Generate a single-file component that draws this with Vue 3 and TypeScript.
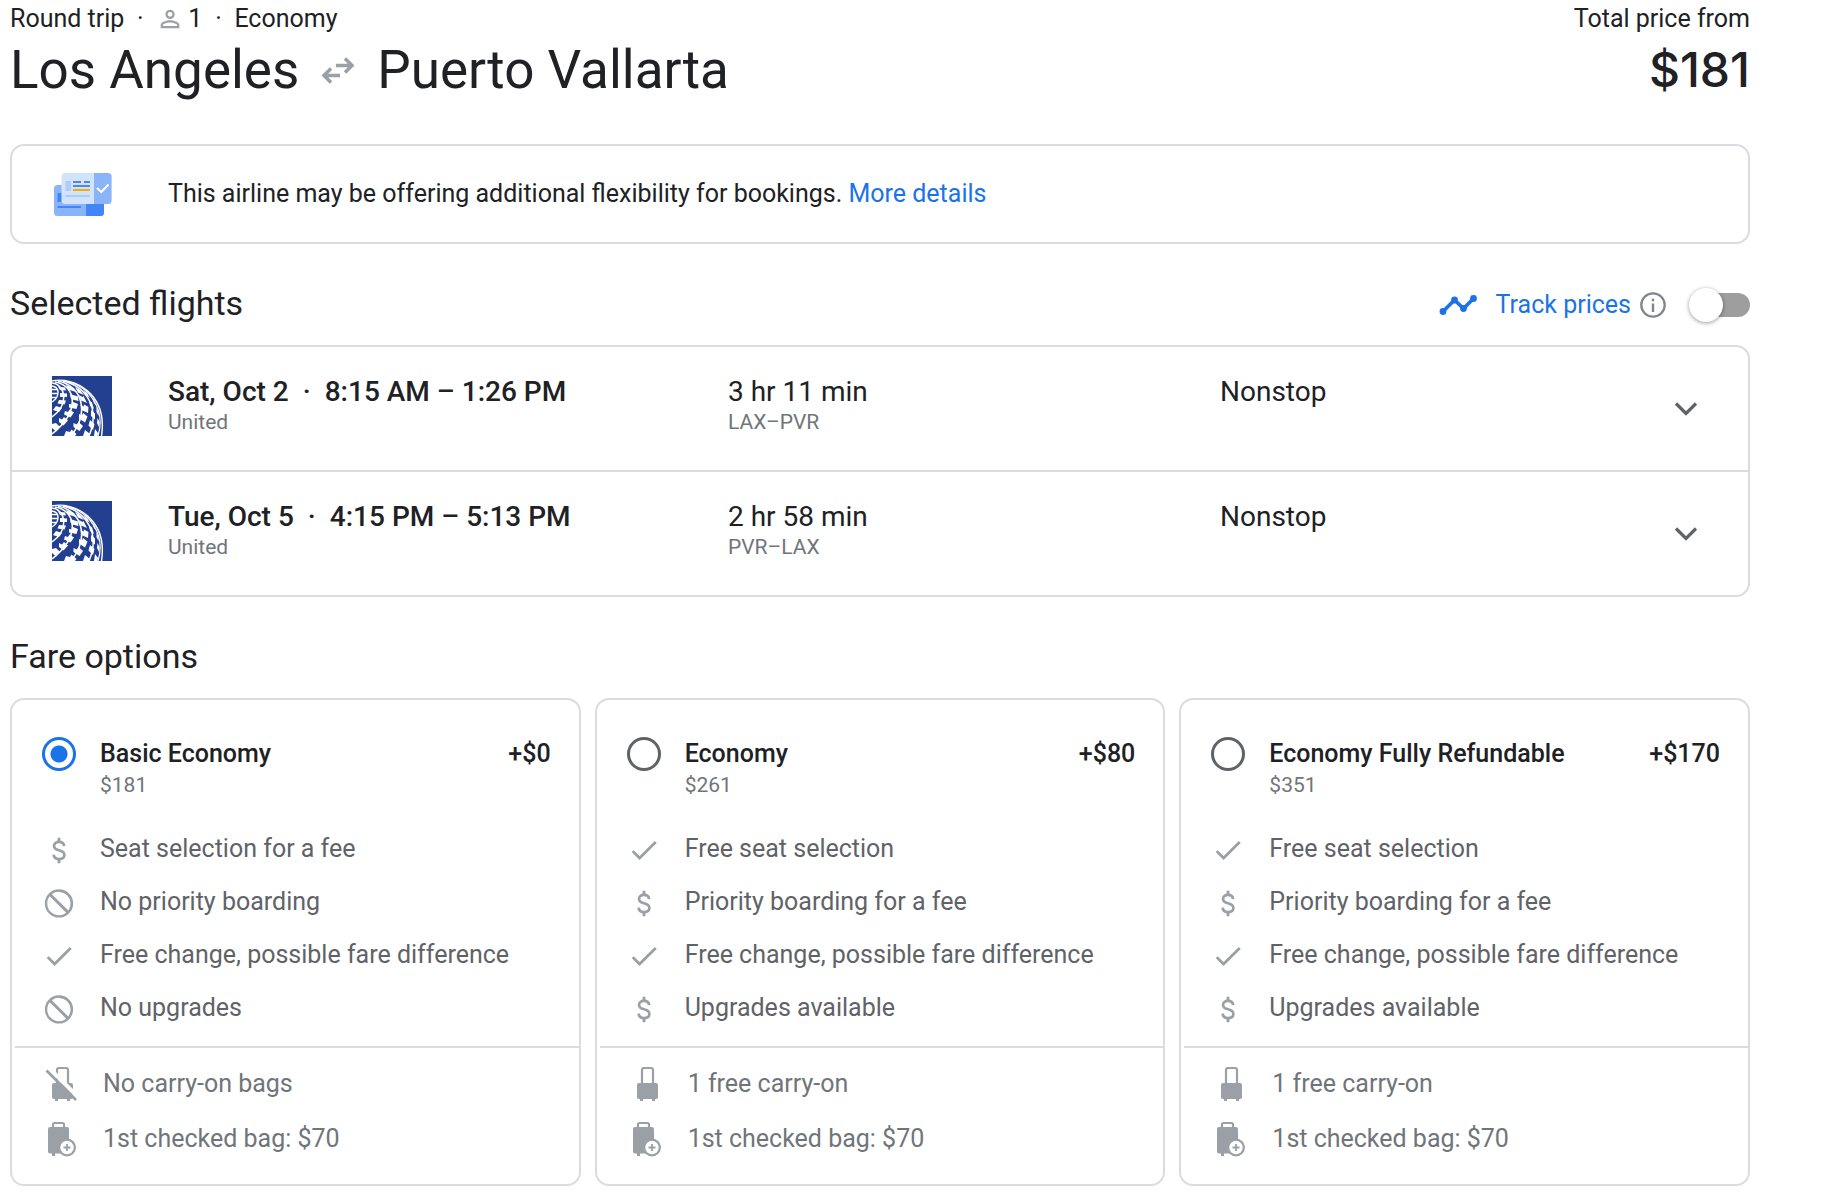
<script setup lang="ts">
import { ref } from 'vue'

type Perk = 'fee' | 'none' | 'included'
type Bag = 'noCarryOn' | 'carryOn' | 'checked'

interface Flight {
  id: string
  date: string
  times: string
  airline: string
  duration: string
  route: string
  stops: string
}

interface Fare {
  id: string
  name: string
  extra: string
  total: string
  perks: { kind: Perk; text: string }[]
  bags: { kind: Bag; text: string }[]
}

const flights: Flight[] = [
  { id: 'out', date: 'Sat, Oct 2', times: '8:15 AM – 1:26 PM', airline: 'United', duration: '3 hr 11 min', route: 'LAX–PVR', stops: 'Nonstop' },
  { id: 'back', date: 'Tue, Oct 5', times: '4:15 PM – 5:13 PM', airline: 'United', duration: '2 hr 58 min', route: 'PVR–LAX', stops: 'Nonstop' },
]

const fares: Fare[] = [
  {
    id: 'basic',
    name: 'Basic Economy',
    extra: '+$0',
    total: '$181',
    perks: [
      { kind: 'fee', text: 'Seat selection for a fee' },
      { kind: 'none', text: 'No priority boarding' },
      { kind: 'included', text: 'Free change, possible fare difference' },
      { kind: 'none', text: 'No upgrades' },
    ],
    bags: [
      { kind: 'noCarryOn', text: 'No carry-on bags' },
      { kind: 'checked', text: '1st checked bag: $70' },
    ],
  },
  {
    id: 'economy',
    name: 'Economy',
    extra: '+$80',
    total: '$261',
    perks: [
      { kind: 'included', text: 'Free seat selection' },
      { kind: 'fee', text: 'Priority boarding for a fee' },
      { kind: 'included', text: 'Free change, possible fare difference' },
      { kind: 'fee', text: 'Upgrades available' },
    ],
    bags: [
      { kind: 'carryOn', text: '1 free carry-on' },
      { kind: 'checked', text: '1st checked bag: $70' },
    ],
  },
  {
    id: 'refundable',
    name: 'Economy Fully Refundable',
    extra: '+$170',
    total: '$351',
    perks: [
      { kind: 'included', text: 'Free seat selection' },
      { kind: 'fee', text: 'Priority boarding for a fee' },
      { kind: 'included', text: 'Free change, possible fare difference' },
      { kind: 'fee', text: 'Upgrades available' },
    ],
    bags: [
      { kind: 'carryOn', text: '1 free carry-on' },
      { kind: 'checked', text: '1st checked bag: $70' },
    ],
  },
]

const selectedFare = ref('basic')
const trackPrices = ref(false)
</script>

<template>
  <main class="page">
    <header class="trip">
      <div>
        <p class="summary">
          <span>Round trip</span>
          <span class="dot">·</span>
          <svg class="person" viewBox="0 0 24 24" aria-hidden="true">
            <path d="M12 5.9a2.1 2.1 0 1 1 0 4.2 2.1 2.1 0 0 1 0-4.2m0 9c2.97 0 6.1 1.46 6.1 2.1v1.1H5.9V17c0-.64 3.13-2.1 6.1-2.1M12 4a4 4 0 1 0 0 8 4 4 0 0 0 0-8zm0 9c-2.67 0-8 1.34-8 4v3h16v-3c0-2.66-5.33-4-8-4z" />
          </svg>
          <span class="count">1</span>
          <span class="dot">·</span>
          <span>Economy</span>
        </p>
        <h1 class="cities">
          <span>Los Angeles</span>
          <svg class="swap" viewBox="0 0 34 27" aria-label="round trip to">
            <path d="M15 8.500H31M24 1.500l7 7-7 7M19 18.500H3M10 11.500l-7 7 7 7" />
          </svg>
          <span>Puerto Vallarta</span>
        </h1>
      </div>
      <div class="total">
        <p>Total price from</p>
        <p class="amount">$181</p>
      </div>
    </header>

    <section class="notice">
      <svg class="tickets" viewBox="0 0 58 43" aria-hidden="true">
        <rect x="0" y="12" width="50" height="31" rx="3.500" fill="#8ab4f8" />
        <path d="M32 31h18v8.500a3.500 3.500 0 0 1-3.500 3.500H32z" fill="#4285f4" />
        <path d="M3.500 20H8v9H3.500zM3.500 33H27v2H3.500z" fill="#4285f4" />
        <rect x="7.500" y="0" width="50" height="31" rx="3.500" fill="#d2e3fc" />
        <path d="M40 0h14a3.500 3.500 0 0 1 3.500 3.500v24A3.500 3.500 0 0 1 54 31H40z" fill="#8ab4f8" />
        <path d="M11.500 8H17v10h-5.500zM11.500 22H36v2H11.500z" fill="#aecbfa" />
        <path d="M19 8h8v2h-8zM30 8h6v2h-6zM19 12h17v2H19z" fill="#5087ec" />
        <path d="M19 16h17v2H19z" fill="#f9ab00" />
        <path d="M43 15l4.300 4 7.200-7.500" fill="none" stroke="#fff" stroke-width="2" />
      </svg>
      <p>
        This airline may be offering additional flexibility for bookings.
        <a href="#details">More details</a>
      </p>
    </section>

    <div class="section-head">
      <h2>Selected flights</h2>
      <div class="track">
        <svg class="trend" viewBox="0 0 38 22" aria-hidden="true">
          <path d="M4 17.500L15.500 6l9 8.500L34.500 4.500" fill="none" stroke="#1a73e8" stroke-width="3.600" />
          <g fill="#1a73e8">
            <circle cx="4" cy="17.500" r="3.400" />
            <circle cx="15.500" cy="6" r="3.400" />
            <circle cx="24.500" cy="14.500" r="3.400" />
            <circle cx="34.500" cy="4.500" r="3.400" />
          </g>
        </svg>
        <label for="track-toggle">Track prices</label>
        <button class="info" type="button" aria-label="About price tracking">
          <svg viewBox="0 0 26 26" aria-hidden="true">
            <circle cx="13" cy="13" r="11.700" fill="none" stroke="#80868b" stroke-width="2.300" />
            <path d="M11.800 11.500h2.400V20h-2.400zM11.800 6.800h2.400v2.400h-2.400z" fill="#80868b" />
          </svg>
        </button>
        <input id="track-toggle" v-model="trackPrices" class="toggle" type="checkbox" role="switch" />
      </div>
    </div>

    <ul class="flights">
      <li v-for="flight in flights" :key="flight.id" class="flight">
        <svg class="airline-logo" viewBox="0 0 60 60" aria-hidden="true">
          <rect width="60" height="60" fill="#233f90" />
          <g fill="none" stroke="#fff">
            <path d="M0 5C22 0 56 18 49.500 60" stroke-width="1.400" />
            <path d="M13 5C38 10 54 34 46 60" stroke-width="1.200" />
            <path d="M11 5C36 11 48 34 37 60" stroke-width="1.500" />
            <path d="M6 5C30 10 38 36 19 60" stroke-width="1.600" />
            <path d="M3 6C23 9 30 34 0 58" stroke-width="1.600" />
            <path d="M0 7C13 8 18 28 0 41" stroke-width="1.500" />
            <path d="M0 10C8 11 8 21 0 26" stroke-width="1.400" />
            <path d="M0 13.500h5M0 17.500h5.500M0 21.500h4" stroke-width="1.700" />
          </g>
          <g fill="#fff">
            <path d="M6 10.500l7 1 1 3-6-.5zM8 17l7 .5v3.500H8zM7 24l7 .5-1.500 4-7-1zM4 30l6 2-3 4-6-2z" />
            <path d="M14 9l8 3 2 4-8-2.500zM18 18l8 2.500.5 4.500-6-1.500-2-2zM17 28l3 .5 1-2.500 5 2-1.500 5-7.500-1.500zM13 35l3 1 1.500-2.500 4.500 3-3.500 5-6.500-3zM7 42l3 1.500 2-2.500 4 3.500-4.500 5L7 46zM0 48l4-1 4 4-5 3.500-3-2.500z" />
            <path d="M23 11l5 3 4 5-6-2.500zM27 19l3.500 2 1-1 3.500 7-6-2.500zM28.500 29l3 1.500.5-2 4.500 2.500-.5 6-6.500-3zM27 38l3 1.500 1-2.500 4.500 3.500-2.500 6-6-4zM21.500 47l3.500 1.500 1.500-2.500 4.500 4-3.500 5-6-4zM14 55l4 1 1.500-2.500 5 4.500-1.500 2H12z" />
            <path d="M31 14l4 3 3 5-4-3zM37 24l3 2.500 2 6.500-4-3zM39 34l4 3.500v6l-4-3.500zM38 44l4.500 4-1.500 6-4.500-4.500zM33 54l5 4-1 2h-6z" />
            <path d="M41 22l2 4 .5 3-2-3zM44.500 31l2 5v4l-2-4zM45.500 42l2 4-.5 5-2-4zM43 53l3 4-.5 3h-3.500z" />
          </g>
        </svg>
        <div>
          <p class="primary when">
            <span>{{ flight.date }}</span><span class="dot">·</span><span>{{ flight.times }}</span>
          </p>
          <p class="secondary">{{ flight.airline }}</p>
        </div>
        <div>
          <p class="primary">{{ flight.duration }}</p>
          <p class="secondary">{{ flight.route }}</p>
        </div>
        <p class="primary">{{ flight.stops }}</p>
        <button class="expand" type="button" aria-label="Show flight details">
          <svg viewBox="0 0 24 16" aria-hidden="true">
            <path d="M2 2.500l10 10 10-10" fill="none" stroke="#5f6368" stroke-width="3.200" />
          </svg>
        </button>
      </li>
    </ul>

    <div class="section-head fares-head">
      <h2>Fare options</h2>
    </div>

    <div class="fares">
      <article v-for="fare in fares" :key="fare.id" class="fare">
        <div class="fare-head">
          <input :id="fare.id" v-model="selectedFare" class="radio" type="radio" name="fare" :value="fare.id" />
          <label :for="fare.id" class="fare-name">{{ fare.name }}</label>
          <span class="fare-extra">{{ fare.extra }}</span>
          <span class="fare-total">{{ fare.total }}</span>
        </div>
        <ul class="perks">
          <li v-for="perk in fare.perks" :key="perk.text">
            <svg class="perk-icon" viewBox="0 -1 24 24" aria-hidden="true">
              <g v-if="perk.kind === 'fee'" fill="none">
                <path d="M15.600 9c-.1-1.900-1.500-3-3.600-3s-3.500 1.100-3.500 2.800c0 1.800 1.500 2.500 3.600 3.100 2.300.6 3.700 1.500 3.700 3.300 0 1.800-1.500 2.900-3.800 2.900s-3.700-1.200-3.800-3.100" stroke-width="1.900" />
                <path d="M12 3v3M12 18v3" stroke-width="2" />
              </g>
              <path v-else-if="perk.kind === 'none'" class="solid" d="M12 2a10 10 0 1 0 0 20 10 10 0 0 0 0-20zM3.700 12c0-1.900.65-3.660 1.750-5.050L17.050 18.550A8.300 8.300 0 0 1 3.700 12zm14.850 5.050L6.950 5.450a8.300 8.300 0 0 1 11.600 11.600z" />
              <path v-else class="solid" d="M8.900 16L4.700 11.800l-1.400 1.400 5.600 5.600L21 6.700l-1.400-1.400z" />
            </svg>
            <span>{{ perk.text }}</span>
          </li>
        </ul>
        <ul class="bags">
          <li v-for="bag in fare.bags" :key="bag.text">
            <svg class="bag-icon" viewBox="0 0 36 36" aria-hidden="true">
              <template v-if="bag.kind !== 'checked'">
                <path d="M14 18V4a2 2 0 0 1 2-2h7a2 2 0 0 1 2 2v14" fill="none" stroke="#9aa0a6" stroke-width="2.200" />
                <path d="M11 17h17a2 2 0 0 1 2 2v12a2 2 0 0 1-2 2h-1v2h-3v-2h-9v2h-3v-2h-1a2 2 0 0 1-2-2V19a2 2 0 0 1 2-2z" />
              </template>
              <template v-if="bag.kind === 'noCarryOn'">
                <path d="M5.500 1.500l29 29" stroke="#fff" stroke-width="4" />
                <path d="M3.500 4.500l29.500 29.500" stroke="#9aa0a6" stroke-width="2.600" />
              </template>
              <template v-if="bag.kind === 'checked'">
                <path d="M10 8V3.500A1.500 1.500 0 0 1 11.500 2h8A1.500 1.500 0 0 1 21 3.500V8" fill="none" stroke="#9aa0a6" stroke-width="2.200" />
                <path d="M7 6h17a2 2 0 0 1 2 2v24.500H12V35H9v-2.500H7a2 2 0 0 1-2-2V8a2 2 0 0 1 2-2z" />
                <circle cx="24" cy="26.500" r="9" />
                <circle cx="24" cy="26.500" r="6.700" fill="#fff" />
                <path d="M24 23v7M20.500 26.500h7" stroke="#9aa0a6" stroke-width="1.800" />
              </template>
            </svg>
            <span>{{ bag.text }}</span>
          </li>
        </ul>
      </article>
    </div>
  </main>
</template>

<style>
body {
  margin: 0;
  background: #fff;
}
</style>

<style scoped>
.page {
  margin-right: 86px;
  padding: 3px 0 16px 10px;
  color: #202124;
  font-family: Roboto, "Liberation Sans", sans-serif;
  font-size: 25px;
  line-height: 32px;
}

p,
h1,
h2,
ul {
  margin: 0;
  padding: 0;
  font-weight: 400;
  list-style: none;
}

button {
  padding: 0;
  border: 0;
  background: none;
  cursor: pointer;
}

svg {
  display: block;
  flex: none;
}

.trip {
  display: flex;
  justify-content: space-between;
}

.summary {
  display: flex;
  align-items: center;
}

.dot {
  width: 32px;
  text-align: center;
}

.person {
  width: 28px;
  height: 28px;
  fill: #9aa0a6;
}

.count {
  margin-left: 4px;
}

.cities {
  display: flex;
  align-items: center;
  gap: 22px;
  font-size: 53px;
  line-height: 70px;
}

.swap {
  width: 34px;
  height: 27px;
  fill: none;
  stroke: #9aa0a6;
  stroke-width: 3.5;
}

.total {
  text-align: right;
}

.amount {
  font-family: Inter, Roboto, sans-serif;
  font-size: 48px;
  font-weight: 500;
  line-height: 70px;
}

.notice {
  display: flex;
  align-items: center;
  gap: 56px;
  min-height: 96px;
  margin-top: 39px;
  padding: 0 42px;
  border: 2px solid #dadce0;
  border-radius: 14px;
}

.tickets {
  width: 58px;
  height: 43px;
}

a {
  color: #1a73e8;
  text-decoration: none;
}

.section-head {
  display: flex;
  justify-content: space-between;
  align-items: flex-start;
  margin: 39px 0 18px;
}

.fares-head {
  margin-bottom: 22px;
}

h2 {
  font-size: 34px;
  line-height: 40px;
}

.track {
  display: flex;
  align-items: center;
  height: 44px;
  color: #1a73e8;
}

.trend {
  width: 38px;
  height: 22px;
  margin-right: 19px;
}

.info {
  width: 26px;
  height: 26px;
  margin: 0 26px 0 9px;
}

.toggle {
  position: relative;
  width: 58px;
  height: 24px;
  margin: 0;
  border-radius: 12px;
  background: #9e9e9e;
  appearance: none;
  cursor: pointer;
}

.toggle::before {
  content: "";
  position: absolute;
  top: -5px;
  left: -3px;
  width: 34px;
  height: 34px;
  border-radius: 50%;
  background: #fff;
  box-shadow: 0 1px 4px rgba(0, 0, 0, 0.4);
}

.toggle:checked {
  background: #8ab4f8;
}

.toggle:checked::before {
  left: 27px;
  background: #1a73e8;
}

.flights {
  border: 2px solid #dadce0;
  border-radius: 14px;
}

.flight {
  display: grid;
  grid-template-columns: 116px 560fr 492fr 442fr 48px;
  padding: 29px 38px 34px 40px;
}

.flight + .flight {
  border-top: 2px solid #dadce0;
}

.airline-logo {
  width: 60px;
  height: 60px;
}

.primary {
  font-size: 28px;
}

.when {
  display: flex;
  font-weight: 500;
}

.when .dot {
  width: 36px;
}

.secondary {
  color: #70757a;
  font-size: 21px;
  line-height: 28px;
}

.expand {
  display: grid;
  place-items: center;
  height: 48px;
  margin-top: 9px;
}

.expand svg {
  width: 24px;
  height: 16px;
}

.fares {
  display: grid;
  grid-template-columns: repeat(3, 1fr);
  gap: 14px;
}

.fare {
  border: 2px solid #dadce0;
  border-radius: 14px;
}

.fare-head {
  display: grid;
  grid-template-columns: 34px 1fr auto;
  column-gap: 24px;
  align-items: center;
  padding: 37px 28px 23px 30px;
}

.radio {
  width: 34px;
  height: 34px;
  margin: 0;
  border: 3px solid #5f6368;
  border-radius: 50%;
  appearance: none;
  cursor: pointer;
}

.radio:checked {
  border-color: #1a73e8;
  background: radial-gradient(circle, #1a73e8 8px, transparent 9px);
}

.fare-name,
.fare-extra {
  font-weight: 500;
}

.fare-total {
  grid-column: 2;
  color: #70757a;
  font-size: 21px;
  line-height: 28px;
}

.perks {
  padding: 0 30px 12px;
  color: #5f6368;
}

.perks li {
  display: flex;
  align-items: center;
  gap: 24px;
  height: 53px;
}

.perk-icon {
  width: 34px;
  height: 34px;
  stroke: #9aa0a6;
}

.perk-icon .solid {
  fill: #9aa0a6;
  stroke: none;
}

.bags {
  margin-left: 3px;
  padding: 8px 28px 18px;
  border-top: 2px solid #dadce0;
  color: #70757a;
}

.bags li {
  display: flex;
  align-items: center;
  gap: 24px;
  height: 55px;
}

.bag-icon {
  width: 36px;
  height: 36px;
  fill: #9aa0a6;
}
</style>
